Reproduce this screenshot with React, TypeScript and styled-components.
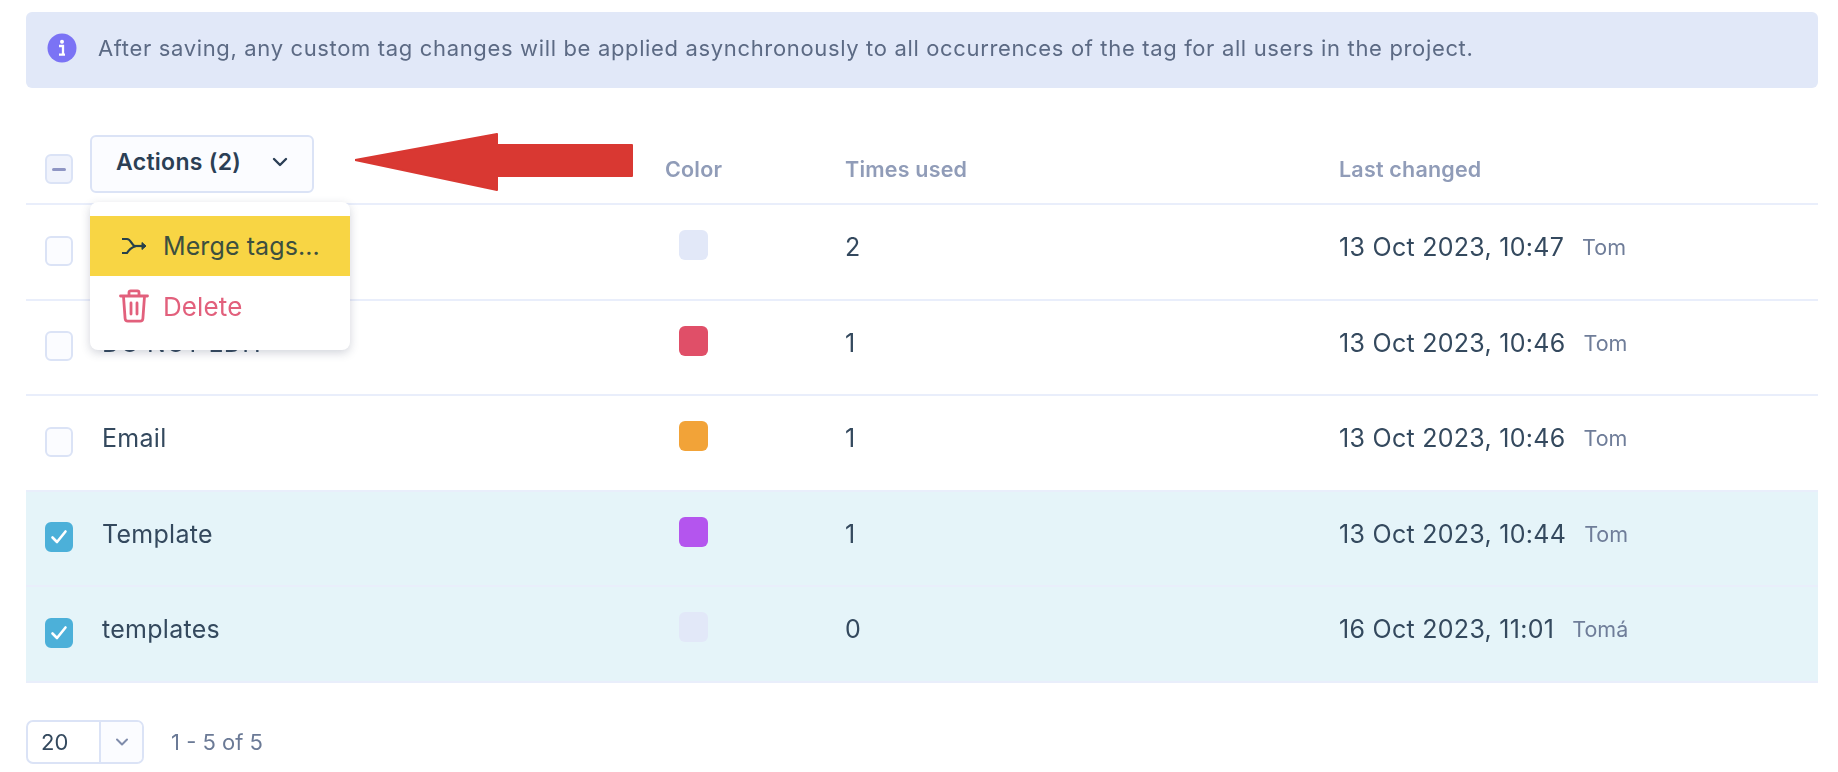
import React from "react";
import styled, { createGlobalStyle } from "styled-components";
import { ChevronDown } from "lucide-react";

const Global = createGlobalStyle`
  html, body { margin: 0; padding: 0; background: #fff; }
  body { font-family: Inter, "Liberation Sans", sans-serif; color: #34495e; }
`;

const Page = styled.div`
  width: 1838px;
  height: 772px;
  box-sizing: border-box;
  padding: 12px 20px 0 26px;
  overflow: hidden;
  position: relative;
  filter: blur(0.55px);
`;

const Banner = styled.div`
  height: 76px;
  background: #e1e8f8;
  border-radius: 6px;
  display: flex;
  align-items: center;
  padding: 0 0 4px 21px;
  box-sizing: border-box;
  gap: 21px;
  font-size: 22px;
  letter-spacing: 0.65px;
  color: #5c6a84;
`;

const Table = styled.div`
  margin-top: 29px;
  position: relative;
`;

const columns = "57px 563px 180px 494px 1fr";

const HeaderRow = styled.div`
  height: 88px;
  display: grid;
  grid-template-columns: ${columns};
  align-items: center;
  padding-left: 19px;
  border-bottom: 2px solid #e9eefb;
  box-sizing: border-box;
`;

const HeaderLabel = styled.div`
  font-size: 21.5px;
  font-weight: 600;
  letter-spacing: 0.2px;
  color: #909cb8;
  padding-top: 18px;
`;

const Row = styled.div<{ $selected?: boolean }>`
  height: 95.5px;
  display: grid;
  grid-template-columns: ${columns};
  align-items: center;
  padding-left: 19px;
  border-bottom: 2px solid #e9eefb;
  box-sizing: border-box;
  background: ${(p) => (p.$selected ? "#e5f4f9" : "#fff")};
  font-size: 25px;
  letter-spacing: 0.28px;
`;

const Cell = styled.div`
  padding-bottom: 9px;
  white-space: nowrap;
`;

const LastChanged = styled(Cell)`
  display: flex;
  align-items: center;
  width: 288px;
  overflow: hidden;
`;

const UserName = styled.span`
  font-size: 21.5px;
  letter-spacing: 0;
  color: #6f7d99;
  margin-left: 18px;
`;

const Check = styled.div<{ $on?: boolean }>`
  width: 28px;
  height: 30px;
  margin-bottom: 2px;
  box-sizing: border-box;
  border-radius: 6px;
  border: 2px solid ${(p) => (p.$on ? "#4cb0d9" : "#dbe3f6")};
  background: ${(p) => (p.$on ? "#4cb0d9" : "#fbfcff")};
  display: flex;
  align-items: center;
  justify-content: center;
`;

const HeaderCheck = styled(Check)`
  margin: 18px 0 0;
  background: #f0f3fc;
`;

const Dash = styled.div`
  width: 14px;
  height: 3px;
  border-radius: 2px;
  background: #8f96c4;
`;

const Swatch = styled.div<{ $color: string }>`
  width: 29px;
  height: 30px;
  border-radius: 6px;
  background: ${(p) => p.$color};
  margin: 0 0 13px 14px;
`;

const ActionsButton = styled.div`
  position: absolute;
  left: 64px;
  top: 18px;
  width: 224px;
  height: 58px;
  box-sizing: border-box;
  border: 2px solid #dbe3f6;
  border-radius: 6px;
  background: #fbfcff;
  display: flex;
  align-items: center;
  justify-content: space-between;
  padding: 0 20px 4px 24px;
  font-size: 23px;
  font-weight: 600;
  letter-spacing: 0.3px;
  color: #2b3f55;
`;

const Arrow = styled.svg`
  position: absolute;
  left: 329px;
  top: 15px;
`;

const Menu = styled.div`
  position: absolute;
  left: 64px;
  top: 85px;
  width: 260px;
  height: 148px;
  background: #fff;
  border-radius: 8px;
  box-shadow: 0 3px 10px rgba(50, 60, 90, 0.22);
  padding-top: 14px;
  box-sizing: border-box;
  z-index: 2;
`;

const MenuItem = styled.div<{ $active?: boolean; $danger?: boolean }>`
  height: 60px;
  display: flex;
  align-items: center;
  gap: 14px;
  padding-left: 29px;
  font-size: ${(p) => (p.$danger ? "26px" : "25px")};
  letter-spacing: 0.1px;
  background: ${(p) => (p.$active ? "#f8d544" : "transparent")};
  color: ${(p) => (p.$danger ? "#e2607c" : "#3c4f3f")};
`;

const Footer = styled.div`
  margin-top: 37px;
  display: flex;
  align-items: center;
  gap: 27px;
  font-size: 22px;
  color: #6b7a96;
`;

const PageSize = styled.div`
  width: 118px;
  height: 44px;
  box-sizing: border-box;
  border: 2px solid #dbe3f6;
  border-radius: 7px;
  display: flex;
  overflow: hidden;
`;

const PageSizeValue = styled.div`
  flex: 1;
  display: flex;
  align-items: center;
  padding-left: 13px;
  font-size: 22px;
  color: #34495e;
`;

const PageSizeToggle = styled.div`
  width: 41px;
  border-left: 2px solid #dbe3f6;
  background: #fbfcff;
  display: flex;
  align-items: center;
  justify-content: center;
  color: #7f8cab;
`;

const InfoIcon = () => (
  <svg width="30" height="30" viewBox="0 0 30 30">
    <circle cx="15" cy="15" r="14.5" fill="#7b73f5" />
    <circle cx="15" cy="8.8" r="2" fill="#fff" />
    <path d="M12 13h4v8.2M12 21.6h6" stroke="#fff" strokeWidth="2.3" fill="none" />
  </svg>
);

const CheckMark = () => (
  <svg width="18" height="16" viewBox="0 0 18 16">
    <path d="M2.5 8.5 7 13 15.5 2.5" stroke="#fff" strokeWidth="2.6" fill="none" strokeLinecap="round" strokeLinejoin="round" />
  </svg>
);

const MergeIcon = () => (
  <svg width="30" height="24" viewBox="0 0 30 24" fill="none" stroke="#26404a" strokeWidth="2.2">
    <path d="M3 5h5c4 0 5 7 8 7s-4 0-8 7H3" strokeLinejoin="round" />
    <path d="M16 12h10" />
    <path d="M23 8.5l4 3.5-4 3.5z" fill="#26404a" strokeWidth="1" />
  </svg>
);

const TrashIcon = () => (
  <svg width="30" height="34" viewBox="0 0 30 34" fill="none" stroke="#e2607c" strokeWidth="2.8" strokeLinejoin="round" strokeLinecap="round">
    <path d="M1.5 7h27" />
    <path d="M10 6.5V3.5c0-1 .6-1.6 1.6-1.6h6.8c1 0 1.6.6 1.6 1.6v3" />
    <path d="M4.5 7.5l1.6 22c.1 1.7 1.2 2.6 2.8 2.6h12.2c1.6 0 2.7-.9 2.8-2.6l1.6-22" />
    <path d="M12 14v11M18 14v11" />
  </svg>
);

type RowData = {
  name: string;
  color: string;
  used: number;
  date: string;
  user: string;
  selected?: boolean;
};

const rows: RowData[] = [
  { name: "", color: "#e2e8f8", used: 2, date: "13 Oct 2023, 10:47", user: "Tom" },
  { name: "DO NOT EDIT", color: "#e04f68", used: 1, date: "13 Oct 2023, 10:46", user: "Tom" },
  { name: "Email", color: "#f2a338", used: 1, date: "13 Oct 2023, 10:46", user: "Tom" },
  { name: "Template", color: "#b455ee", used: 1, date: "13 Oct 2023, 10:44", user: "Tom", selected: true },
  { name: "templates", color: "#e2e8f8", used: 0, date: "16 Oct 2023, 11:01", user: "Tomáš", selected: true },
];

export default function App() {
  return (
    <Page>
      <Global />
      <Banner>
        <InfoIcon />
        After saving, any custom tag changes will be applied asynchronously to all occurrences of the tag for all users in the project.
      </Banner>
      <Table>
        <HeaderRow>
          <HeaderCheck>
            <Dash />
          </HeaderCheck>
          <div />
          <HeaderLabel>Color</HeaderLabel>
          <HeaderLabel>Times used</HeaderLabel>
          <HeaderLabel>Last changed</HeaderLabel>
        </HeaderRow>
        {rows.map((r, i) => (
          <Row key={i} $selected={r.selected}>
            <Check $on={r.selected}>{r.selected && <CheckMark />}</Check>
            <Cell>{r.name}</Cell>
            <Swatch $color={r.color} />
            <Cell>{r.used}</Cell>
            <LastChanged>
              {r.date}
              <UserName>{r.user}</UserName>
            </LastChanged>
          </Row>
        ))}
        <ActionsButton>
          Actions (2)
          <ChevronDown size={24} strokeWidth={2.4} />
        </ActionsButton>
        <Arrow width="278" height="62" viewBox="0 0 278 62">
          <path d="M0 28 L142 2 L142 13 L277 13 L277 44 L142 44 L142 58 Z" fill="#d93832" stroke="#d93832" strokeWidth="2" strokeLinejoin="round" />
        </Arrow>
        <Menu>
          <MenuItem $active>
            <MergeIcon />
            Merge tags...
          </MenuItem>
          <MenuItem $danger>
            <TrashIcon />
            Delete
          </MenuItem>
        </Menu>
      </Table>
      <Footer>
        <PageSize>
          <PageSizeValue>20</PageSizeValue>
          <PageSizeToggle>
            <ChevronDown size={20} strokeWidth={2.4} />
          </PageSizeToggle>
        </PageSize>
        1 - 5 of 5
      </Footer>
    </Page>
  );
}
